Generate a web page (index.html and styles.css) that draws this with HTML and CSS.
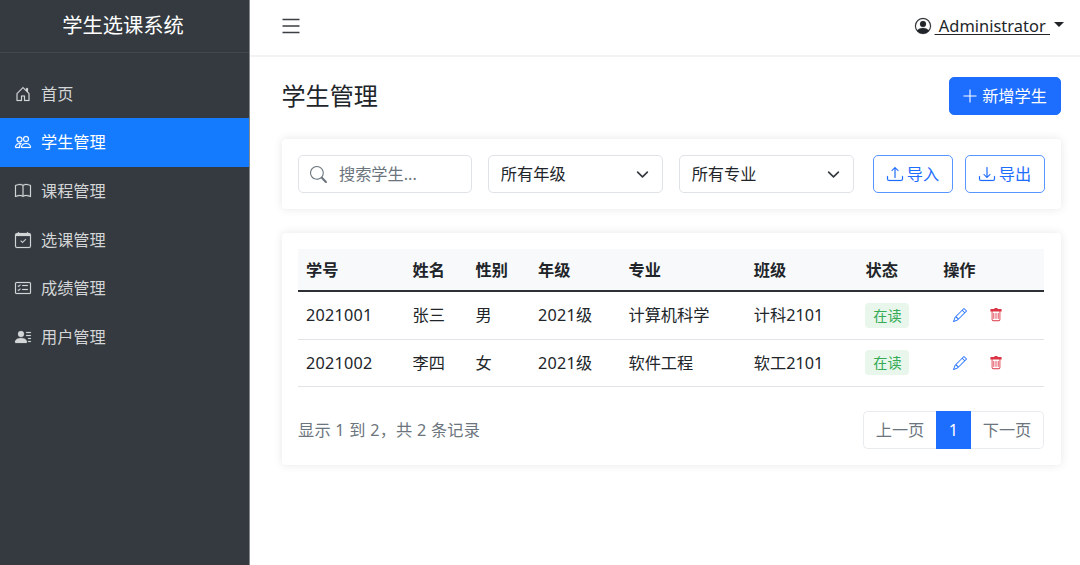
FILE: index.html
```html
<!DOCTYPE html>
<html lang="zh-CN">
<head>
<meta charset="utf-8">
<title>学生选课系统</title>
<link rel="stylesheet" href="styles.css">
</head>
<body>
<div class="app">
  <aside class="sidebar">
    <div class="brand">学生选课系统</div>
    <nav class="menu">
      <a class="menu-item"><svg class="icon" viewBox="0 0 16 16"><path d="M8.354 1.146a.5.5 0 0 0-.708 0l-6 6A.5.5 0 0 0 1.500 7.500v7a.5.5 0 0 0 .5.5h4.500a.5.5 0 0 0 .5-.5v-4h2v4a.5.5 0 0 0 .5.5H14a.5.5 0 0 0 .5-.5v-7a.5.5 0 0 0-.146-.354L13 5.793V2.500a.5.5 0 0 0-.5-.5h-1a.5.5 0 0 0-.5.5v1.293zM2.500 14V7.707l5.500-5.500 5.500 5.500V14H10v-4a.5.5 0 0 0-.5-.5h-3a.5.5 0 0 0-.5.5v4z"/></svg><span>首页</span></a>
      <a class="menu-item active"><svg class="icon" viewBox="0 0 16 16"><path d="M15 14s1 0 1-1-1-4-5-4-5 3-5 4 1 1 1 1zm-7.978-1L7 12.996c.001-.264.167-1.030.760-1.720C8.312 10.629 9.282 10 11 10c1.717 0 2.687.630 3.240 1.276.593.690.758 1.457.760 1.720l-.008.002-.014.002zM11 7a2 2 0 1 0 0-4 2 2 0 0 0 0 4m3-2a3 3 0 1 1-6 0 3 3 0 0 1 6 0M6.936 9.280a6 6 0 0 0-1.230-.247A7 7 0 0 0 5 9c-4 0-5 3-5 4q0 1 1 1h4.216A2.240 2.240 0 0 1 5 13c0-1.010.377-2.042 1.090-2.904.243-.294.526-.569.846-.816M4.920 10A5.500 5.500 0 0 0 4 13H1c0-.260.164-1.030.760-1.724.545-.636 1.492-1.256 3.160-1.275ZM1.500 5.500a3 3 0 1 1 6 0 3 3 0 0 1-6 0m3-2a2 2 0 1 0 0 4 2 2 0 0 0 0-4"/></svg><span>学生管理</span></a>
      <a class="menu-item"><svg class="icon" viewBox="0 0 16 16"><path d="M1 2.828c.885-.370 2.154-.769 3.388-.893 1.330-.134 2.458.063 3.112.752v9.746c-.935-.530-2.120-.603-3.213-.493-1.180.120-2.370.461-3.287.811zm7.500-.141c.654-.689 1.782-.886 3.112-.752 1.234.124 2.503.523 3.388.893v9.923c-.918-.350-2.107-.692-3.287-.810-1.094-.111-2.278-.039-3.213.492zM8 1.783C7.015.936 5.587.810 4.287.940c-1.514.153-3.042.672-3.994 1.105A.5.5 0 0 0 0 2.500v11a.5.5 0 0 0 .707.455c.882-.400 2.303-.881 3.680-1.020 1.409-.142 2.590.087 3.223.877a.5.5 0 0 0 .780 0c.633-.790 1.814-1.019 3.222-.877 1.378.139 2.800.620 3.681 1.020A.5.5 0 0 0 16 13.500v-11a.5.5 0 0 0-.293-.455c-.952-.433-2.480-.952-3.994-1.105C10.413.809 8.985.936 8 1.783"/></svg><span>课程管理</span></a>
      <a class="menu-item"><svg class="icon" viewBox="0 0 16 16"><path d="M10.854 7.146a.5.5 0 0 1 0 .708l-3 3a.5.5 0 0 1-.708 0l-1.500-1.500a.5.5 0 1 1 .708-.708L7.500 9.793l2.646-2.647a.5.5 0 0 1 .708 0"/><path d="M3.500 0a.5.5 0 0 1 .5.5V1h8V.5a.5.5 0 0 1 1 0V1h1a2 2 0 0 1 2 2v11a2 2 0 0 1-2 2H2a2 2 0 0 1-2-2V3a2 2 0 0 1 2-2h1V.5a.5.5 0 0 1 .5-.5M1 4v10a1 1 0 0 0 1 1h12a1 1 0 0 0 1-1V4z"/></svg><span>选课管理</span></a>
      <a class="menu-item"><svg class="icon" viewBox="0 0 16 16"><path d="M14.500 3a.5.5 0 0 1 .5.5v9a.5.5 0 0 1-.5.5h-13a.5.5 0 0 1-.5-.5v-9a.5.5 0 0 1 .5-.5zm-13-1A1.500 1.500 0 0 0 0 3.500v9A1.500 1.500 0 0 0 1.500 14h13a1.500 1.500 0 0 0 1.500-1.500v-9A1.500 1.500 0 0 0 14.500 2z"/><path d="M7 5.500a.5.5 0 0 1 .5-.5h5a.5.5 0 0 1 0 1h-5a.5.5 0 0 1-.5-.5m-1.496-.854a.5.5 0 0 1 0 .708l-1.500 1.500a.5.5 0 0 1-.708 0l-.5-.5a.5.5 0 1 1 .708-.708l.146.147 1.146-1.147a.5.5 0 0 1 .708 0M7 9.500a.5.5 0 0 1 .5-.5h5a.5.5 0 0 1 0 1h-5a.5.5 0 0 1-.5-.5m-1.496-.854a.5.5 0 0 1 0 .708l-1.500 1.500a.5.5 0 0 1-.708 0l-.5-.5a.5.5 0 0 1 .708-.708l.146.147 1.146-1.147a.5.5 0 0 1 .708 0"/></svg><span>成绩管理</span></a>
      <a class="menu-item"><svg class="icon" viewBox="0 0 16 16"><path d="M6 8a3 3 0 1 0 0-6 3 3 0 0 0 0 6m-5 6s-1 0-1-1 1-4 6-4 6 3 6 4-1 1-1 1zM11 3.500a.5.5 0 0 1 .5-.5h4a.5.5 0 0 1 0 1h-4a.5.5 0 0 1-.5-.5m.5 2.500a.5.5 0 0 0 0 1h4a.5.5 0 0 0 0-1zm2 3a.5.5 0 0 0 0 1h2a.5.5 0 0 0 0-1zm0 3a.5.5 0 0 0 0 1h2a.5.5 0 0 0 0-1z"/></svg><span>用户管理</span></a>
    </nav>
  </aside>
  <div class="content">
    <header class="topbar">
      <svg class="burger" viewBox="0 0 18 16"><path d="M.5 1.500h17M.5 8h17M.5 14.500h17"/></svg>
      <div class="user"><svg class="icon" viewBox="0 0 16 16"><path d="M11 6a3 3 0 1 1-6 0 3 3 0 0 1 6 0"/><path fill-rule="evenodd" d="M0 8a8 8 0 1 1 16 0A8 8 0 0 1 0 8m8-7a7 7 0 0 0-5.468 11.370C3.242 11.226 4.805 10 8 10s4.757 1.225 5.468 2.370A7 7 0 0 0 8 1"/></svg><span class="user-name">&nbsp;Administrator&nbsp;</span><span class="caret"></span></div>
    </header>
    <main class="main">
      <div class="heading">
        <h1 class="title">学生管理</h1>
        <button class="btn primary"><svg class="plus" viewBox="0 0 14 14"><path d="M7 .5v13M.5 7h13"/></svg>新增学生</button>
      </div>
      <section class="card filters">
        <div class="field search"><svg class="icon" viewBox="0 0 16 16"><path d="M11.742 10.344a6.500 6.500 0 1 0-1.397 1.398h-.001q.044.060.098.115l3.850 3.850a1 1 0 0 0 1.415-1.414l-3.850-3.850a1 1 0 0 0-.115-.100zM12 6.500a5.500 5.500 0 1 1-11 0 5.500 5.500 0 0 1 11 0"/></svg><span>搜索学生...</span></div>
        <div class="field select"><span>所有年级</span><svg class="chevron" viewBox="0 0 16 16"><path d="m2 5 6 6 6-6"/></svg></div>
        <div class="field select"><span>所有专业</span><svg class="chevron" viewBox="0 0 16 16"><path d="m2 5 6 6 6-6"/></svg></div>
        <div class="actions">
          <button class="btn outline"><svg class="icon" viewBox="0 0 16 16"><path d="M.5 9.900a.5.5 0 0 1 .5.5v2.500a1 1 0 0 0 1 1h12a1 1 0 0 0 1-1v-2.500a.5.5 0 0 1 1 0v2.500a2 2 0 0 1-2 2H2a2 2 0 0 1-2-2v-2.500a.5.5 0 0 1 .5-.5"/><path d="M7.646 1.146a.5.5 0 0 1 .708 0l3 3a.5.5 0 0 1-.708.708L8.500 2.707V11.500a.5.5 0 0 1-1 0V2.707L5.354 4.854a.5.5 0 1 1-.708-.708z"/></svg>导入</button>
          <button class="btn outline"><svg class="icon" viewBox="0 0 16 16"><path d="M.5 9.900a.5.5 0 0 1 .5.5v2.500a1 1 0 0 0 1 1h12a1 1 0 0 0 1-1v-2.500a.5.5 0 0 1 1 0v2.500a2 2 0 0 1-2 2H2a2 2 0 0 1-2-2v-2.500a.5.5 0 0 1 .5-.5"/><path d="M7.646 11.854a.5.5 0 0 0 .708 0l3-3a.5.5 0 0 0-.708-.708L8.500 10.293V1.500a.5.5 0 0 0-1 0v8.793L5.354 8.146a.5.5 0 1 0-.708.708z"/></svg>导出</button>
        </div>
      </section>
      <section class="card list">
        <table class="table">
          <colgroup><col class="c-id"><col class="c-name"><col class="c-sex"><col class="c-grade"><col class="c-major"><col class="c-class"><col class="c-state"><col class="c-ops"></colgroup>
          <thead><tr><th>学号</th><th>姓名</th><th>性别</th><th>年级</th><th>专业</th><th>班级</th><th>状态</th><th>操作</th></tr></thead>
          <tbody>
            <tr><td class="number">2021001</td><td>张三</td><td>男</td><td class="number">2021级</td><td>计算机科学</td><td>计科2101</td><td><span class="badge">在读</span></td><td><div class="ops"><svg class="op edit" viewBox="0 0 16 16"><path d="M12.146.146a.5.5 0 0 1 .708 0l3 3a.5.5 0 0 1 0 .708l-10 10a.5.5 0 0 1-.168.110l-5 2a.5.5 0 0 1-.650-.650l2-5a.5.5 0 0 1 .110-.168zM11.207 2.500 13.500 4.793 14.793 3.500 12.500 1.207zm1.586 3L10.500 3.207 4 9.707V10h.5a.5.5 0 0 1 .5.5v.5h.5a.5.5 0 0 1 .5.5v.5h.293zm-9.761 5.175-.106.106-1.528 3.821 3.821-1.528.106-.106A.5.5 0 0 1 5 12.500V12h-.5a.5.5 0 0 1-.5-.5V11h-.5a.5.5 0 0 1-.468-.325"/></svg><svg class="op trash" viewBox="0 0 16 16"><path d="M5.500 5.500A.5.5 0 0 1 6 6v6a.5.5 0 0 1-1 0V6a.5.5 0 0 1 .5-.5m2.500 0a.5.5 0 0 1 .5.5v6a.5.5 0 0 1-1 0V6a.5.5 0 0 1 .5-.5m3 .5a.5.5 0 0 0-1 0v6a.5.5 0 0 0 1 0z"/><path d="M14.500 3a1 1 0 0 1-1 1H13v9a2 2 0 0 1-2 2H5a2 2 0 0 1-2-2V4h-.5a1 1 0 0 1-1-1V2a1 1 0 0 1 1-1H6a1 1 0 0 1 1-1h2a1 1 0 0 1 1 1h3.500a1 1 0 0 1 1 1zM4 4v9a1 1 0 0 0 1 1h6a1 1 0 0 0 1-1V4z"/></svg></div></td></tr>
            <tr><td class="number">2021002</td><td>李四</td><td>女</td><td class="number">2021级</td><td>软件工程</td><td>软工2101</td><td><span class="badge">在读</span></td><td><div class="ops"><svg class="op edit" viewBox="0 0 16 16"><path d="M12.146.146a.5.5 0 0 1 .708 0l3 3a.5.5 0 0 1 0 .708l-10 10a.5.5 0 0 1-.168.110l-5 2a.5.5 0 0 1-.650-.650l2-5a.5.5 0 0 1 .110-.168zM11.207 2.500 13.500 4.793 14.793 3.500 12.500 1.207zm1.586 3L10.500 3.207 4 9.707V10h.5a.5.5 0 0 1 .5.5v.5h.5a.5.5 0 0 1 .5.5v.5h.293zm-9.761 5.175-.106.106-1.528 3.821 3.821-1.528.106-.106A.5.5 0 0 1 5 12.500V12h-.5a.5.5 0 0 1-.5-.5V11h-.5a.5.5 0 0 1-.468-.325"/></svg><svg class="op trash" viewBox="0 0 16 16"><path d="M5.500 5.500A.5.5 0 0 1 6 6v6a.5.5 0 0 1-1 0V6a.5.5 0 0 1 .5-.5m2.500 0a.5.5 0 0 1 .5.5v6a.5.5 0 0 1-1 0V6a.5.5 0 0 1 .5-.5m3 .5a.5.5 0 0 0-1 0v6a.5.5 0 0 0 1 0z"/><path d="M14.500 3a1 1 0 0 1-1 1H13v9a2 2 0 0 1-2 2H5a2 2 0 0 1-2-2V4h-.5a1 1 0 0 1-1-1V2a1 1 0 0 1 1-1H6a1 1 0 0 1 1-1h2a1 1 0 0 1 1 1h3.500a1 1 0 0 1 1 1zM4 4v9a1 1 0 0 0 1 1h6a1 1 0 0 0 1-1V4z"/></svg></div></td></tr>
          </tbody>
        </table>
        <div class="footer">
          <span class="summary">显示 1 到 2，共 2 条记录</span>
          <div class="pager"><a class="page prev">上一页</a><a class="page current">1</a><a class="page next">下一页</a></div>
        </div>
      </section>
    </main>
  </div>
</div>
</body>
</html>
```
FILE: styles.css
```css
* { box-sizing: border-box; }
body {
  margin: 0;
  height: 565px;
  overflow: hidden;
  background: #fff;
  color: #212529;
  font: 16.2px/24px "Noto Sans", "Noto Sans CJK SC", sans-serif;
}
svg { display: block; flex: none; fill: currentColor; }
.icon { width: 16px; height: 16px; stroke: currentColor; stroke-width: .2; overflow: visible; }
.app { display: flex; height: 565px; }

.sidebar {
  width: 250px;
  flex: none;
  background: #343a40;
  border-right: 1px solid #85898c;
  color: #d3d5d6;
}
.brand {
  height: 53px;
  border-bottom: 1px solid #42484e;
  color: #fff;
  font-size: 20.3px;
  line-height: 50px;
  text-align: center;
  padding-right: 3px;
}
.menu { padding-top: 16.5px; }
.menu-item {
  display: flex;
  align-items: center;
  gap: 10px;
  height: 48.6px;
  padding-left: 15px;
}
.menu-item.active { background: #147bff; color: #fff; }

.content { flex: 1; min-width: 0; }
.topbar {
  display: flex;
  align-items: center;
  justify-content: space-between;
  height: 57px;
  border-bottom: 2px solid #f3f3f4;
  padding: 0 16px 4px 31.5px;
}
.burger { width: 18px; height: 16px; fill: none; stroke: #3b3f43; stroke-width: 1.3; }
.user { display: flex; align-items: center; }
.user .icon { margin-right: 4px; }
.user-name { font-size: 16.4px; letter-spacing: .03px; text-decoration: underline; text-underline-offset: 2px; }
.caret {
  margin: 0 0 3px 4px;
  border: 5px solid transparent;
  border-top-color: #212529;
  border-bottom: 0;
}

.main { padding: 20px 19px 0 32px; }
.heading { display: flex; align-items: center; justify-content: space-between; height: 38px; }
.title { margin: 0 0 0 -.5px; font-size: 24.1px; font-weight: 400; line-height: 36px; }
.btn {
  display: flex;
  align-items: center;
  justify-content: center;
  height: 38px;
  padding: 0 0 1px;
  border: 1px solid;
  border-radius: 5px;
  font: inherit;
}
.primary { width: 112px; gap: 5px; background: #1d6dff; border-color: #1d6dff; color: #fff; }
.plus { width: 14px; height: 14px; fill: none; stroke: currentColor; stroke-width: 1.1; }
.outline { width: 80px; gap: 4px; background: #fff; border-color: #5795ff; color: #1d6dff; }

.card { background: #fff; border-radius: 4px; box-shadow: 0 0 10px rgba(0, 0, 0, .1); }
.filters { display: flex; height: 70px; margin-top: 24px; padding: 16px; gap: 16px; }
.field {
  display: flex;
  align-items: center;
  flex: 1;
  height: 38px;
  padding: 0 13px 0 11.5px;
  border: 1px solid #dfe3e7;
  border-radius: 5px;
}
.search { color: #6c757d; gap: 12px; padding-left: 11px; }
.search .icon { width: 17px; height: 17px; stroke: none; }
.select { justify-content: space-between; }
.chevron { width: 13px; height: 13px; fill: none; stroke: #343a40; stroke-width: 2; stroke-linecap: round; stroke-linejoin: round; }
.actions { display: flex; gap: 12px; margin-left: 3px; }

.list { height: 232px; margin-top: 24px; padding: 16px; }
.table { width: 746px; table-layout: fixed; border-collapse: separate; border-spacing: 0; }
.c-id { width: 106.5px; }
.c-name { width: 63px; }
.c-sex { width: 62.5px; }
.c-grade { width: 90.5px; }
.c-major { width: 125.3px; }
.c-class { width: 111.7px; }
.c-state { width: 77.7px; }
.table th, .table td { padding: 0 8px; text-align: left; white-space: nowrap; }
.table th { height: 43px; background: #f8f9fa; border-bottom: 2px solid #2d3035; font-weight: 700; }
.table td { height: 47.5px; border-bottom: 1px solid #e1e4e7; }
.table .number { letter-spacing: .25px; }
.badge {
  display: block;
  width: 44px;
  height: 25px;
  border-radius: 4px;
  background: #e8f6ec;
  color: #35ab55;
  font-size: 14.2px;
  line-height: 25px;
  text-align: center;
}
.ops { display: flex; gap: 22px; padding-left: 10px; }
.op { width: 14px; height: 14px; }
.edit { color: #1d6dff; }
.trash { color: #dc3545; }
.footer { display: flex; align-items: center; justify-content: space-between; height: 38px; margin-top: 24px; padding-right: 1px; }
.summary { color: #6c757d; letter-spacing: .24px; }
.pager { display: flex; height: 38px; color: #6c757d; }
.page { display: flex; align-items: center; justify-content: center; width: 73px; border: 1px solid #e9ecef; }
.prev { border-right: 0; border-radius: 5px 0 0 5px; }
.current { width: 35px; background: #1d6dff; border-color: #1d6dff; color: #fff; }
.next { border-left: 0; border-radius: 0 5px 5px 0; }
```
